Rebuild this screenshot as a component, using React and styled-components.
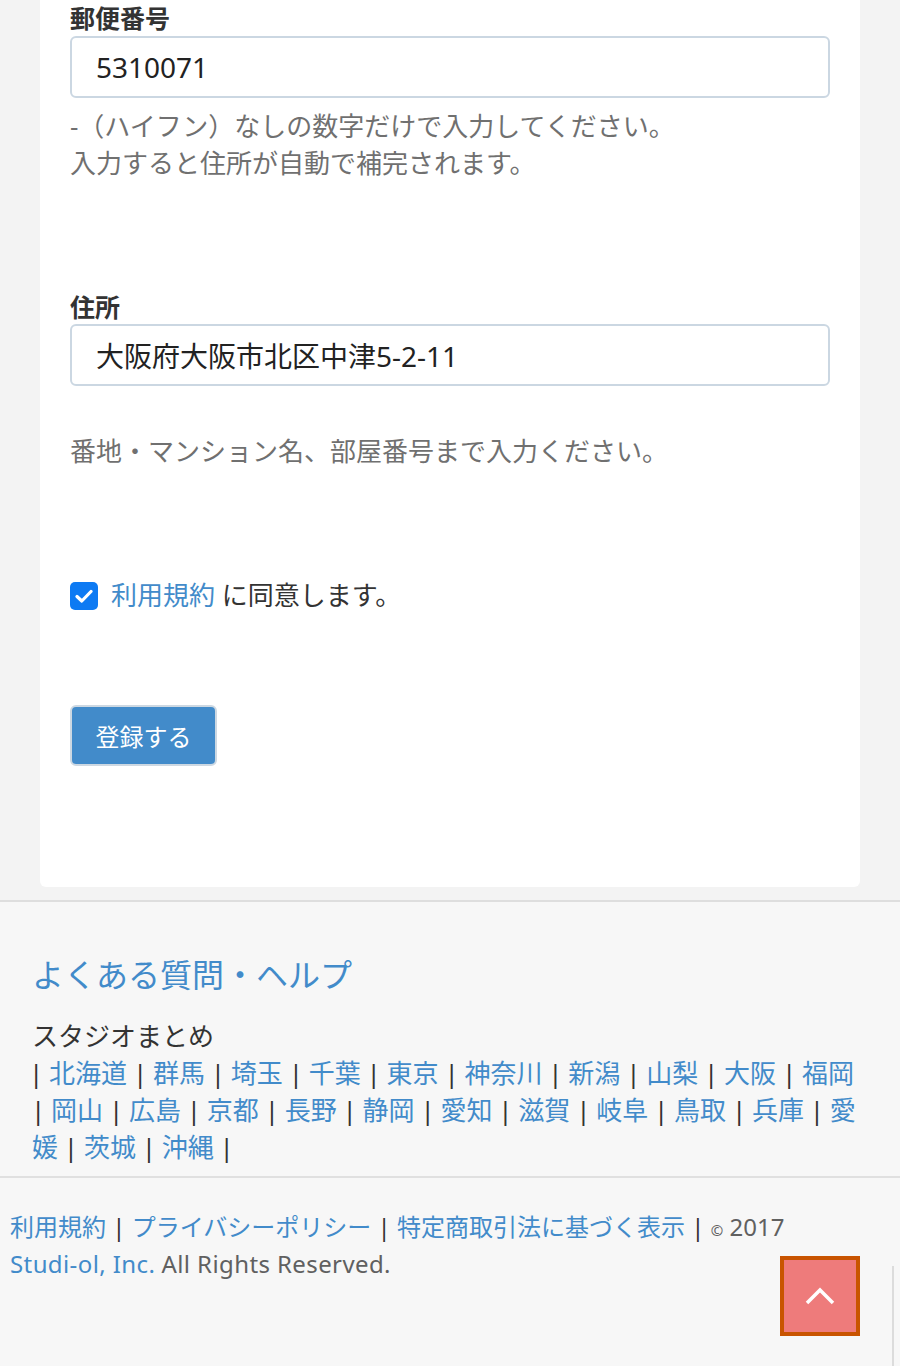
import React from 'react';
import styled, { createGlobalStyle } from 'styled-components';

const GlobalStyle = createGlobalStyle`
	body {
		margin: 0;
		background: #f7f7f7;
		font-family: "Noto Sans", "Noto Sans CJK JP", sans-serif;
		color: #333;
	}
	a {
		color: #428bca;
		text-decoration: none;
	}
`;

const Main = styled.main`
	background: #f3f3f3;
	padding: 0 40px 13px;
`;

const Card = styled.div`
	background: #fff;
	border-radius: 0 0 6px 6px;
	padding: 3px 30px 121px;
`;

const Label = styled.div`
	margin-top: ${props => props.top}px;
	font-size: 25px;
	font-weight: 700;
	line-height: 30px;
	color: #333;
`;

const Input = styled.input`
	display: block;
	box-sizing: border-box;
	width: 100%;
	height: 62px;
	margin-top: ${props => props.top}px;
	padding: 0 24px;
	border: 2px solid #cbd7e2;
	border-radius: 6px;
	background: #fff;
	font-family: inherit;
	font-size: 28px;
	color: #222;
	outline: none;
`;

const Help = styled.p`
	margin: ${props => props.top}px 0 0;
	font-size: 26px;
	line-height: 37px;
	color: #707070;
`;

const AgreeRow = styled.label`
	display: flex;
	align-items: center;
	gap: 13px;
	height: 37px;
	margin-top: 107px;
	font-size: 26px;
	line-height: 37px;
	color: #333;
`;

const CheckBox = styled.span`
	display: flex;
	align-items: center;
	justify-content: center;
	width: 28px;
	height: 28px;
	border-radius: 5px;
	background: #0d7af3;
`;

const SubmitButton = styled.button`
	display: block;
	margin-top: 91px;
	width: 147px;
	height: 61px;
	border: 2px solid #cdd8e2;
	border-radius: 6px;
	background: #428bca;
	color: #fff;
	font-family: inherit;
	font-size: 24px;
	padding: 0;
`;

const Footer = styled.footer`
	border-top: 2px solid #dedede;
	background: #f7f7f7;
`;

const HelpSection = styled.section`
	padding: 51px 30px 10px 32px;
	border-bottom: 2px solid #e0e0e0;
`;

const HelpTitle = styled.h2`
	margin: 0;
	font-size: 32px;
	font-weight: 400;
	line-height: 44px;
	color: #428bca;
`;

const PrefList = styled.div`
	margin-top: 21px;
	font-size: 26px;
	line-height: 37px;
	color: #333;
`;

const Sep = styled.span`
	margin: ${props => props.margin || '0'};
	color: #333;
`;

const Copyright = styled.div`
	padding: 32px 10px 89px;
	font-size: 24px;
	line-height: 34px;
	color: #606060;
`;

const Company = styled.a`
	white-space: nowrap;
`;

const Rights = styled.span`
	letter-spacing: 0.4px;
`;

const CopyMark = styled.span`
	font-size: 15px;
`;

const ToTop = styled.button`
	position: fixed;
	right: 40px;
	bottom: 30px;
	width: 80px;
	height: 80px;
	display: flex;
	align-items: center;
	justify-content: center;
	padding: 0;
	background: #ee7b7b;
	border: 4px solid #c85400;
`;

const EdgeLine = styled.div`
	position: fixed;
	right: 6px;
	bottom: 0;
	width: 2px;
	height: 100px;
	background: #dcdcdc;
`;

const prefs = [
	'北海道', '群馬', '埼玉', '千葉', '東京', '神奈川', '新潟', '山梨', '大阪', '福岡',
	'岡山', '広島', '京都', '長野', '静岡', '愛知', '滋賀', '岐阜', '鳥取', '兵庫',
	'愛媛', '茨城', '沖縄'
];

const App = () => {
	return (
		<>
			<GlobalStyle />
			<Main>
				<Card>
					<Label top={0}>郵便番号</Label>
					<Input top={3} defaultValue="5310071" />
					<Help top={10}>
						-（ハイフン）なしの数字だけで入力してください。<br />
						入力すると住所が自動で補完されます。
					</Help>

					<Label top={110}>住所</Label>
					<Input top={2} defaultValue="大阪府大阪市北区中津5-2-11" />
					<Help top={47}>番地・マンション名、部屋番号まで入力ください。</Help>

					<AgreeRow>
						<CheckBox>
							<svg width="18" height="14" viewBox="0 0 18 14">
								<path d="M2 7.5 L6.8 12 L16 2.5" fill="none" stroke="#fff" strokeWidth="3.2" strokeLinecap="round" strokeLinejoin="round" />
							</svg>
						</CheckBox>
						<span><a href="#">利用規約</a> に同意します。</span>
					</AgreeRow>

					<SubmitButton>登録する</SubmitButton>
				</Card>
			</Main>

			<Footer>
				<HelpSection>
					<HelpTitle>よくある質問・ヘルプ</HelpTitle>
					<PrefList>
						スタジオまとめ<br />
						<Sep margin="0 -1px 0 -3px">|</Sep>{' '}
						{prefs.map((p, i) => (
							<React.Fragment key={i}>
								<a href="#">{p}</a> <Sep margin="0 -1px">|</Sep>{' '}
							</React.Fragment>
						))}
					</PrefList>
				</HelpSection>
				<Copyright>
					<a href="#">利用規約</a> <Sep>|</Sep> <a href="#">プライバシーポリシー</a> <Sep>|</Sep> <a href="#">特定商取引法に基づく表示</a> <Sep>|</Sep> <CopyMark>©</CopyMark> 2017 <Company href="#"><Rights>Studi-ol, Inc.</Rights></Company> <Rights>All Rights Reserved.</Rights>
				</Copyright>
			</Footer>

			<ToTop>
				<svg width="30" height="18" viewBox="0 0 30 18">
					<path d="M2 16 L15 3 L28 16" fill="none" stroke="#fff" strokeWidth="3.5" />
				</svg>
			</ToTop>
			<EdgeLine />
		</>
	);
};

export default App;
